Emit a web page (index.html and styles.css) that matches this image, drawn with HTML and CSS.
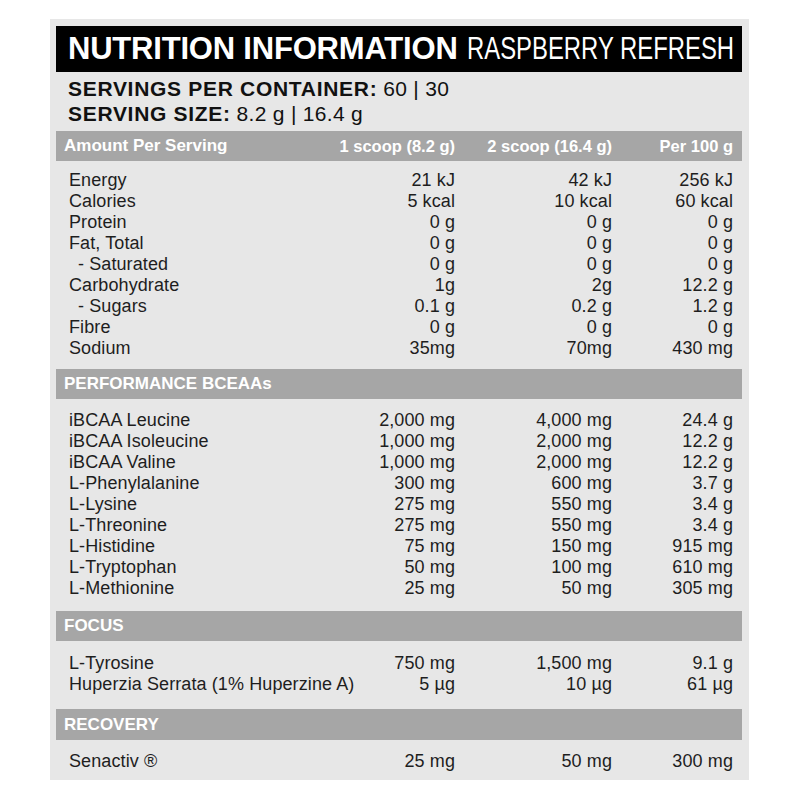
FILE: index.html
```html
<!DOCTYPE html>
<html>
<head>
<meta charset="utf-8">
<link rel="stylesheet" href="styles.css">
</head>
<body>
<div class="panel">
  <div class="title"><span class="t-bold">NUTRITION INFORMATION</span><span class="t-light">RASPBERRY REFRESH</span></div>
  <div class="servings">
    <div><b>SERVINGS PER CONTAINER:</b> <span class="reg">60 | 30</span></div>
    <div><b>SERVING SIZE:</b> <span class="reg">8.2 g | 16.4 g</span></div>
  </div>

  <div class="bar grid"><span class="bar-label">Amount Per Serving</span><span class="num">1 scoop (8.2 g)</span><span class="num">2 scoop (16.4 g)</span><span class="num">Per 100 g</span></div>
  <div class="rows rows-first">
    <div class="row grid"><span>Energy</span><span class="num">21 kJ</span><span class="num">42 kJ</span><span class="num">256 kJ</span></div>
    <div class="row grid"><span>Calories</span><span class="num">5 kcal</span><span class="num">10 kcal</span><span class="num">60 kcal</span></div>
    <div class="row grid"><span>Protein</span><span class="num">0 g</span><span class="num">0 g</span><span class="num">0 g</span></div>
    <div class="row grid"><span>Fat, Total</span><span class="num">0 g</span><span class="num">0 g</span><span class="num">0 g</span></div>
    <div class="row grid"><span class="sub">- Saturated</span><span class="num">0 g</span><span class="num">0 g</span><span class="num">0 g</span></div>
    <div class="row grid"><span>Carbohydrate</span><span class="num">1g</span><span class="num">2g</span><span class="num">12.2 g</span></div>
    <div class="row grid"><span class="sub">- Sugars</span><span class="num">0.1 g</span><span class="num">0.2 g</span><span class="num">1.2 g</span></div>
    <div class="row grid"><span>Fibre</span><span class="num">0 g</span><span class="num">0 g</span><span class="num">0 g</span></div>
    <div class="row grid"><span>Sodium</span><span class="num">35mg</span><span class="num">70mg</span><span class="num">430 mg</span></div>
  </div>

  <div class="bar grid"><span class="bar-label">PERFORMANCE BCEAAs</span></div>
  <div class="rows rows-perf">
    <div class="row grid"><span>iBCAA Leucine</span><span class="num">2,000 mg</span><span class="num">4,000 mg</span><span class="num">24.4 g</span></div>
    <div class="row grid"><span>iBCAA Isoleucine</span><span class="num">1,000 mg</span><span class="num">2,000 mg</span><span class="num">12.2 g</span></div>
    <div class="row grid"><span>iBCAA Valine</span><span class="num">1,000 mg</span><span class="num">2,000 mg</span><span class="num">12.2 g</span></div>
    <div class="row grid"><span>L-Phenylalanine</span><span class="num">300 mg</span><span class="num">600 mg</span><span class="num">3.7 g</span></div>
    <div class="row grid"><span>L-Lysine</span><span class="num">275 mg</span><span class="num">550 mg</span><span class="num">3.4 g</span></div>
    <div class="row grid"><span>L-Threonine</span><span class="num">275 mg</span><span class="num">550 mg</span><span class="num">3.4 g</span></div>
    <div class="row grid"><span>L-Histidine</span><span class="num">75 mg</span><span class="num">150 mg</span><span class="num">915 mg</span></div>
    <div class="row grid"><span>L-Tryptophan</span><span class="num">50 mg</span><span class="num">100 mg</span><span class="num">610 mg</span></div>
    <div class="row grid"><span>L-Methionine</span><span class="num">25 mg</span><span class="num">50 mg</span><span class="num">305 mg</span></div>
  </div>

  <div class="bar grid"><span class="bar-label">FOCUS</span></div>
  <div class="rows rows-focus">
    <div class="row grid"><span>L-Tyrosine</span><span class="num">750 mg</span><span class="num">1,500 mg</span><span class="num">9.1 g</span></div>
    <div class="row grid"><span>Huperzia Serrata (1% Huperzine A)</span><span class="num">5 µg</span><span class="num">10 µg</span><span class="num">61 µg</span></div>
  </div>

  <div class="bar bar-tall grid"><span class="bar-label">RECOVERY</span></div>
  <div class="rows rows-recovery">
    <div class="row grid"><span>Senactiv ®</span><span class="num">25 mg</span><span class="num">50 mg</span><span class="num">300 mg</span></div>
  </div>
</div>
</body>
</html>
```

FILE: styles.css
```css
body {
  margin: 0;
  background: #ffffff;
  font-family: "Liberation Sans", Arial, sans-serif;
  color: #1e1e1e;
}

.panel {
  width: 686px;
  margin: 19px 0 0 50px;
  padding: 7px 7px 8px 6px;
  background: #e7e7e7;
}

.title {
  height: 46px;
  background: #000000;
  color: #ffffff;
  display: flex;
  align-items: baseline;
  gap: 9px;
  padding-left: 12px;
  line-height: 46px;
  white-space: nowrap;
  overflow: hidden;
}

.t-bold {
  font-weight: bold;
  font-size: 31px;
  letter-spacing: -0.2px;
}

.t-light {
  display: inline-block;
  font-size: 31px;
  transform: scaleX(0.77);
  transform-origin: left center;
}

.servings {
  padding: 3.5px 0 5.5px 12px;
  font-size: 21px;
  line-height: 25px;
  color: #111111;
  white-space: nowrap;
}

.servings b {
  letter-spacing: 0.7px;
}

.servings .reg {
  letter-spacing: 0.3px;
}

.grid {
  display: grid;
  grid-template-columns: minmax(0, 1fr) 140px 157px 121px;
  white-space: nowrap;
}

.num {
  text-align: right;
}

.bar {
  height: 30px;
  background: #a6a6a6;
  color: #ffffff;
  font-weight: bold;
  font-size: 16.5px;
  padding: 0 9px 0 8px;
  align-items: center;
}

.bar-label {
  font-size: 17px;
}

.bar-tall {
  height: 31px;
}

.rows {
  padding: 0 9px 0 13px;
  font-size: 18px;
  line-height: 21px;
  letter-spacing: 0.1px;
}

.rows-first {
  padding-top: 8.5px;
  padding-bottom: 10.5px;
}

.rows-perf {
  padding-top: 11px;
  padding-bottom: 12px;
}

.rows-focus {
  padding-top: 12px;
  padding-bottom: 14px;
}

.rows-recovery {
  padding-top: 11px;
  padding-bottom: 0;
}

.sub {
  padding-left: 9px;
}
```
